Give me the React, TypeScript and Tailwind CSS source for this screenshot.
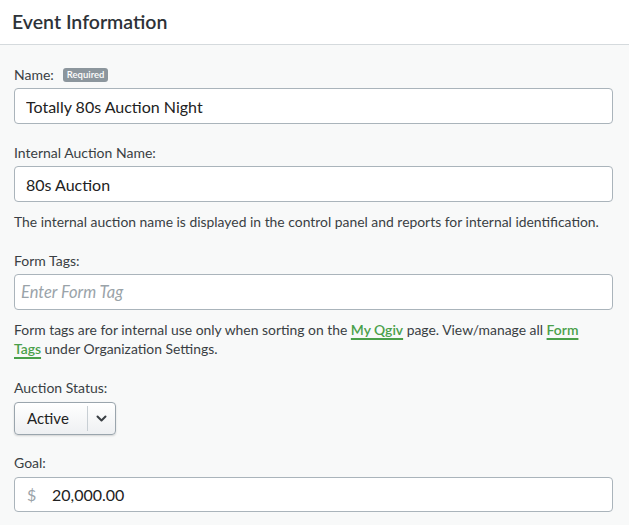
import React from "react";

function Label({ children }: { children: React.ReactNode }) {
  return <div className="text-[14px] leading-[18px] text-[#3a3f44] flex items-center">{children}</div>;
}

export default function App() {
  return (
    <div className="w-[629px] h-[525px] bg-[#f8f9f9] overflow-hidden font-['Lato','Noto_Sans',sans-serif]">
      <div className="h-[45px] bg-white border-b border-[#d5dadd] flex items-center px-[12px]">
        <h1 className="text-[19.5px] font-semibold text-[#2d3238]">Event Information</h1>
      </div>
      <div className="pl-[14px] pr-[16px] pt-[21px] flex flex-col">
        <Label>
          Name:
          <span className="ml-[9px] inline-flex items-center h-[14px] px-[4px] rounded-[3px] bg-[#8c969d] text-white text-[9.5px] font-semibold">Required</span>
        </Label>
        <input
          readOnly
          value="Totally 80s Auction Night"
          className="mt-[4px] h-[36px] w-full rounded-[4px] border border-[#aab4bb] bg-white px-[11px] text-[16px] text-[#222] outline-none"
        />
        <div className="mt-[20px]"><Label>Internal Auction Name:</Label></div>
        <input
          readOnly
          value="80s Auction"
          className="mt-[4px] h-[36px] w-full rounded-[4px] border border-[#aab4bb] bg-white px-[11px] text-[16px] text-[#222] outline-none"
        />
        <p className="mt-[11px] text-[13.9px] leading-[18px] text-[#3a3f44]">
          The internal auction name is displayed in the control panel and reports for internal identification.
        </p>
        <div className="mt-[21px]"><Label>Form Tags:</Label></div>
        <input
          readOnly
          placeholder="Enter Form Tag"
          className="mt-[4px] h-[36px] w-full rounded-[4px] border border-[#aab4bb] bg-white px-[6px] text-[16.5px] italic text-[#222] placeholder:text-[#9aa3a9] outline-none"
        />
        <p className="mt-[10px] pr-[20px] text-[13.9px] leading-[19px] text-[#3a3f44]">
          Form tags are for internal use only when sorting on the{" "}
          <a className="font-semibold text-[#4aa04a] underline decoration-2 underline-offset-[3px] decoration-[#4aa04a]">My Qgiv</a> page. View/manage all{" "}
          <a className="font-semibold text-[#4aa04a] underline decoration-2 underline-offset-[3px] decoration-[#4aa04a]">Form Tags</a> under Organization Settings.
        </p>
        <div className="mt-[21px]"><Label>Auction Status:</Label></div>
        <div className="mt-[5px] flex h-[33px] w-[102px] items-stretch rounded-[4px] border border-[#9aa5ad] bg-gradient-to-b from-white to-[#eef0f2] shadow-[0_1px_2px_rgba(0,0,0,0.15)]">
          <div className="flex flex-1 items-center pl-[12px] text-[15px] text-[#222]">Active</div>
          <div className="my-[3px] w-px bg-[#c8cfd4]"></div>
          <div className="flex w-[27px] items-center justify-center">
            <svg width="11" height="7" viewBox="0 0 11 7">
              <path d="M1.5 1.5 L5.5 5.5 L9.5 1.5" fill="none" stroke="#3a3f44" strokeWidth="2" strokeLinecap="round" strokeLinejoin="round" />
            </svg>
          </div>
        </div>
        <div className="mt-[19px]"><Label>Goal:</Label></div>
        <div className="mt-[5px] flex h-[35px] w-full items-center rounded-[4px] border border-[#aab4bb] bg-white">
          <span className="pl-[12px] w-[37px] text-[16px] text-[#9aa3a9]">$</span>
          <span className="text-[16px] text-[#222]">20,000.00</span>
        </div>
      </div>
    </div>
  );
}
